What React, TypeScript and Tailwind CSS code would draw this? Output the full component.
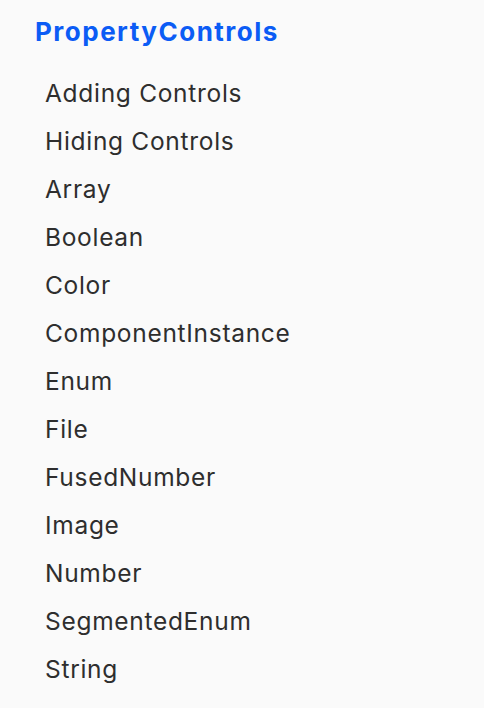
const items = [
  'Adding Controls',
  'Hiding Controls',
  'Array',
  'Boolean',
  'Color',
  'ComponentInstance',
  'Enum',
  'File',
  'FusedNumber',
  'Image',
  'Number',
  'SegmentedEnum',
  'String',
];

export default function App() {
  return (
    <div
      className="w-[484px] h-[708px] bg-[#fafafa] pl-[35px] pt-[14px]"
      style={{ fontFamily: 'Inter, "Noto Sans", sans-serif' }}
    >
      {/* TITLE */}
      <h2 className="text-[26px] leading-[36px] font-bold text-[#0b5cf5] tracking-[1.5px]">
        PropertyControls
      </h2>

      {/* LINKS */}
      <ul className="mt-[19px] pl-[10px]">
        {items.map((item) => (
          <li
            key={item}
            className="h-[48px] flex items-center text-[24.5px] tracking-[0.7px] text-[#2e2e2e]"
          >
            {item}
          </li>
        ))}
      </ul>
    </div>
  );
}
